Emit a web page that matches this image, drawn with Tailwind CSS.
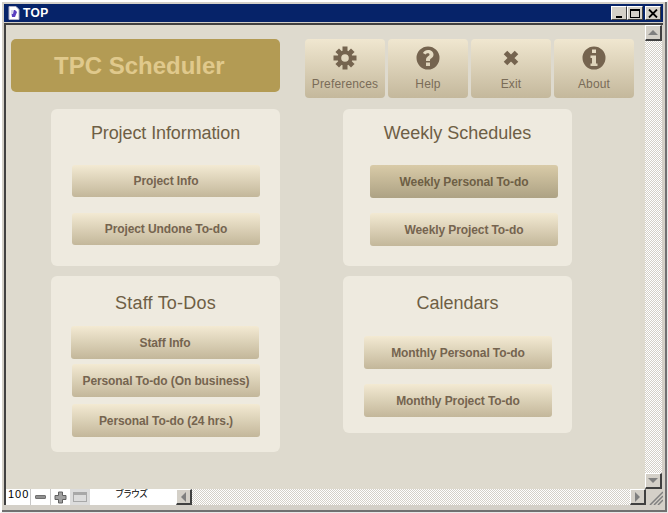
<!DOCTYPE html>
<html lang="ja">
<head>
  <meta charset="UTF-8">
  <title>TOP</title>
  <script src="https://cdn.jsdelivr.net/npm/@tailwindcss/browser@4"></script>
</head>
<body class="bg-[#d4d0c8] overflow-hidden font-['Liberation_Sans','Noto_Sans_CJK_JP',sans-serif]">
  <div class="w-[668px] h-[513px] flex flex-col border-t-2 border-l-2 border-t-white border-l-white border-r border-b border-r-[#e8e8e8] border-b-[#e8e8e8] shadow-[inset_-2px_-2px_0_#707070] pt-[2px] pl-[2px] pr-[4px] pb-[7px]">
    <!-- title bar -->
    <div class="h-[18px] bg-[#062369] flex items-center pl-[4px] pr-[2px] shrink-0">
      <svg width="12" height="14" viewBox="0 0 12 14" class="mr-[3px]">
        <path d="M1 0.500H8L11 3.500V13.500H1Z" fill="#fff" stroke="#b0b0c8"/>
        <path d="M3 4H7L9 6L7 11H4Z" fill="#5a3fc0"/>
        <path d="M3 4H6L5 8H3Z" fill="#d8d8f0"/>
      </svg>
      <span class="text-white text-[12px] font-bold leading-none tracking-[0.4px]">TOP</span>
      <div class="ml-auto flex">
        <div class="w-[16px] h-[14px] bg-[#d4d0c8] border-t border-l border-white border-r border-b border-r-[#404040] border-b-[#404040] flex items-end justify-center pb-[1px]"><div class="w-[6px] h-[2px] bg-black"></div></div>
        <div class="w-[16px] h-[14px] bg-[#d4d0c8] border-t border-l border-white border-r border-b border-r-[#404040] border-b-[#404040] flex items-center justify-center"><div class="w-[10px] h-[9px] border border-black border-t-2"></div></div>
        <div class="w-[16px] h-[14px] ml-[2px] bg-[#d4d0c8] border-t border-l border-white border-r border-b border-r-[#404040] border-b-[#404040] flex items-center justify-center">
          <svg width="10" height="9" viewBox="0 0 10 9"><path d="M1 0.500L9 8.500M9 0.500L1 8.500" stroke="#000" stroke-width="1.800"/></svg>
        </div>
      </div>
    </div>
    <div class="h-[1px] shrink-0"></div>
    <!-- window body -->
    <div class="flex-1 min-h-0 flex flex-col border-t-2 border-l-2 border-t-[#404040] border-l-[#404040]">
      <div class="flex flex-1 min-h-0">
        <main class="w-[639px] bg-[#dedace] pt-[14px] shrink-0">
          <!-- header row -->
          <div class="flex pl-[5px]">
            <div class="w-[269px] h-[53px] bg-[#b39b54] rounded-[5px] flex items-center pl-[43px] mr-[25px]">
              <span class="text-[#e0c98c] text-[24px] font-bold">TPC Scheduler</span>
            </div>
            <div class="flex gap-[3px]">
              <button class="w-[80px] h-[59px] rounded-[4px] bg-linear-to-b from-[#f0e7d0] to-[#c4b89c] flex flex-col items-center pt-[7px] text-[#7a6c58] text-[12px] leading-[14px] tracking-[0.15px]">
                <svg width="24" height="24" viewBox="0 0 24 24" class="mb-[7px]">
                  <g fill="#75644f">
                    <path d="M12 4.500a7.500 7.500 0 1 0 0 15a7.500 7.500 0 1 0 0-15ZM12 8.200a3.800 3.800 0 1 1 0 7.600a3.800 3.800 0 1 1 0-7.600Z" fill-rule="evenodd"/>
                    <rect x="9.500" y="0.500" width="5" height="5"/>
                    <rect x="9.500" y="18.500" width="5" height="5"/>
                    <rect x="0.500" y="9.500" width="5" height="5"/>
                    <rect x="18.500" y="9.500" width="5" height="5"/>
                    <rect x="9.500" y="1" width="5" height="5" transform="rotate(45 12 12)"/>
                    <rect x="9.500" y="18" width="5" height="5" transform="rotate(45 12 12)"/>
                    <rect x="1" y="9.500" width="5" height="5" transform="rotate(45 12 12)"/>
                    <rect x="18" y="9.500" width="5" height="5" transform="rotate(45 12 12)"/>
                  </g>
                </svg>
                Preferences
              </button>
              <button class="w-[80px] h-[59px] rounded-[4px] bg-linear-to-b from-[#f0e7d0] to-[#c4b89c] flex flex-col items-center pt-[7px] text-[#7a6c58] text-[12px] leading-[14px] tracking-[0.15px]">
                <svg width="24" height="24" viewBox="0 0 24 24" class="mb-[7px]">
                  <path fill="#75644f" fill-rule="evenodd" d="M12 0.500a11.500 11.500 0 1 0 0 23a11.500 11.500 0 1 0 0-23ZM10 16.500h4v3.500h-4ZM12 4c3.200 0 5.500 2 5.500 4.600c0 2.100-1.200 3.100-2.400 3.900c-.8.500-1.100.9-1.100 1.900v.6h-4v-1c0-2 .9-3 2.100-3.800c.9-.6 1.400-1 1.400-1.700c0-.8-.7-1.300-1.600-1.300c-1 0-1.700.5-2.400 1.400L6.900 6.900C8.100 5 9.800 4 12 4Z"/>
                </svg>
                Help
              </button>
              <button class="w-[80px] h-[59px] rounded-[4px] bg-linear-to-b from-[#f0e7d0] to-[#c4b89c] flex flex-col items-center pt-[7px] text-[#7a6c58] text-[12px] leading-[14px] tracking-[0.15px]">
                <svg width="24" height="24" viewBox="0 0 24 24" class="mb-[7px]">
                  <path d="M6.500 6.500L17.500 17.500M17.500 6.500L6.500 17.500" stroke="#75644f" stroke-width="5"/>
                </svg>
                Exit
              </button>
              <button class="w-[80px] h-[59px] rounded-[4px] bg-linear-to-b from-[#f0e7d0] to-[#c4b89c] flex flex-col items-center pt-[7px] text-[#7a6c58] text-[12px] leading-[14px] tracking-[0.15px]">
                <svg width="24" height="24" viewBox="0 0 24 24" class="mb-[7px]">
                  <path fill="#75644f" fill-rule="evenodd" d="M12 0.500a11.500 11.500 0 1 0 0 23a11.500 11.500 0 1 0 0-23ZM10 3.500h4v3.500h-4ZM8.500 9.500h5.500v8h1.500v2.500h-7v-2.500h1.500v-5.500h-1.500Z"/>
                </svg>
                About
              </button>
            </div>
          </div>
          <!-- cards -->
          <div class="grid grid-cols-[229px_229px] gap-x-[63px] pl-[45px] mt-[11px] items-start">
            <section class="h-[157px] rounded-[6px] bg-[#eeeadf] mb-[10px] pt-[14px] pl-[21px]">
              <h2 class="ml-[-21px] w-[229px] text-center text-[18px] leading-[21px] tracking-[-0.1px] text-[#6e5f45]">Project Information</h2>
              <button class="block w-[188px] h-[32px] mt-[21px] rounded-[3px] bg-linear-to-b from-[#f3ead3] to-[#c3b79a] text-[12px] font-bold tracking-[-0.1px] text-[#75644f]">Project Info</button>
              <button class="block w-[188px] h-[32px] mt-[16px] rounded-[3px] bg-linear-to-b from-[#f3ead3] to-[#c3b79a] text-[12px] font-bold tracking-[-0.1px] text-[#75644f]">Project Undone To-do</button>
            </section>
            <section class="h-[157px] rounded-[6px] bg-[#eeeadf] mb-[10px] pt-[14px] pl-[27px]">
              <h2 class="ml-[-27px] w-[229px] text-center text-[18px] leading-[21px] text-[#6e5f45]">Weekly Schedules</h2>
              <button class="block w-[188px] h-[33px] mt-[21px] rounded-[3px] bg-linear-to-b from-[#d9cba8] to-[#ada284] text-[12px] font-bold tracking-[-0.1px] text-[#6e5f45]">Weekly Personal To-do</button>
              <button class="block w-[188px] h-[33px] mt-[15px] rounded-[3px] bg-linear-to-b from-[#f3ead3] to-[#c3b79a] text-[12px] font-bold tracking-[-0.1px] text-[#75644f]">Weekly Project To-do</button>
            </section>
            <section class="h-[176px] rounded-[6px] bg-[#eeeadf] pt-[17px] pl-[20px]">
              <h2 class="ml-[-20px] w-[229px] text-center text-[18px] leading-[21px] tracking-[0.2px] text-[#6e5f45]">Staff To-Dos</h2>
              <button class="block w-[188px] h-[33px] mt-[12px] rounded-[3px] bg-linear-to-b from-[#f3ead3] to-[#c3b79a] text-[12px] font-bold tracking-[-0.1px] text-[#75644f]">Staff Info</button>
              <button class="block w-[188px] h-[33px] mt-[5px] ml-[1px] rounded-[3px] bg-linear-to-b from-[#f3ead3] to-[#c3b79a] text-[12px] font-bold tracking-[-0.1px] text-[#75644f]">Personal To-do (On business)</button>
              <button class="block w-[188px] h-[33px] mt-[7px] ml-[1px] rounded-[3px] bg-linear-to-b from-[#f3ead3] to-[#c3b79a] text-[12px] font-bold tracking-[-0.1px] text-[#75644f]">Personal To-do (24 hrs.)</button>
            </section>
            <section class="h-[157px] rounded-[6px] bg-[#eeeadf] pt-[17px] pl-[21px]">
              <h2 class="ml-[-21px] w-[229px] text-center text-[18px] leading-[21px] text-[#6e5f45]">Calendars</h2>
              <button class="block w-[188px] h-[33px] mt-[22px] rounded-[3px] bg-linear-to-b from-[#f3ead3] to-[#c3b79a] text-[12px] font-bold tracking-[-0.1px] text-[#75644f]">Monthly Personal To-do</button>
              <button class="block w-[188px] h-[33px] mt-[15px] rounded-[3px] bg-linear-to-b from-[#f3ead3] to-[#c3b79a] text-[12px] font-bold tracking-[-0.1px] text-[#75644f]">Monthly Project To-do</button>
            </section>
          </div>
        </main>
        <!-- vertical scrollbar -->
        <div class="w-[17px] flex flex-col justify-between bg-[repeating-conic-gradient(#d4d0c8_0_25%,#fff_0_50%)] bg-[length:2px_2px]">
          <div class="h-[16px] bg-[#d4d0c8] border-t border-l border-white border-r-2 border-b-2 border-r-[#404040] border-b-[#404040] flex items-center justify-center"><div class="w-0 h-0 border-x-[5px] border-x-transparent border-b-[5px] border-b-[#808080]"></div></div>
          <div class="h-[16px] bg-[#d4d0c8] border-t border-l border-white border-r-2 border-b-2 border-r-[#404040] border-b-[#404040] flex items-center justify-center"><div class="w-0 h-0 border-x-[5px] border-x-transparent border-t-[5px] border-t-[#808080]"></div></div>
        </div>
      </div>
      <!-- bottom bar -->
      <div class="h-[16px] flex shrink-0 bg-[repeating-conic-gradient(#d4d0c8_0_25%,#fff_0_50%)] bg-[length:2px_2px]">
        <div class="w-[24px] bg-white text-[11px] leading-[11px] tracking-[1px] pl-[2px] text-black">100</div>
        <div class="w-[20px] bg-white border-l border-[#c8c8c8] flex items-center justify-center"><div class="w-[11px] h-[4px] bg-[#909090] border border-[#707070] rounded-[1px]"></div></div>
        <div class="w-[20px] bg-white border-l border-[#c8c8c8] flex items-center justify-center">
          <svg width="13" height="13" viewBox="0 0 13 13"><path d="M4.500 1H8.500V4.500H12V8.500H8.500V12H4.500V8.500H1V4.500H4.500Z" fill="#a0a0a0" stroke="#606060"/></svg>
        </div>
        <div class="w-[20px] bg-[#dcdcdc] flex items-center justify-center"><div class="w-[14px] h-[10px] border border-[#a8a8a8] border-t-[3px]"></div></div>
        <div class="w-[86px] bg-white text-[9px] leading-[11px] tracking-[-1px] text-center pr-[4px] text-black">ブラウズ</div>
        <div class="w-[16px] bg-[#d4d0c8] border-t border-l border-white border-r-2 border-b-2 border-r-[#404040] border-b-[#404040] flex items-center justify-center"><div class="w-0 h-0 border-y-[5px] border-y-transparent border-r-[5px] border-r-[#808080]"></div></div>
        <div class="w-[16px] ml-auto bg-[#d4d0c8] border-t border-l border-white border-r-2 border-b-2 border-r-[#404040] border-b-[#404040] flex items-center justify-center"><div class="w-0 h-0 border-y-[5px] border-y-transparent border-l-[5px] border-l-[#808080]"></div></div>
        <div class="w-[17px] bg-[#d4d0c8] flex items-end justify-end">
          <svg width="15" height="15" viewBox="0 0 15 15"><path d="M2 15L15 2M6 15L15 6M10 15L15 10" stroke="#808080" stroke-width="1.500"/></svg>
        </div>
      </div>
    </div>
  </div>
</body>
</html>
